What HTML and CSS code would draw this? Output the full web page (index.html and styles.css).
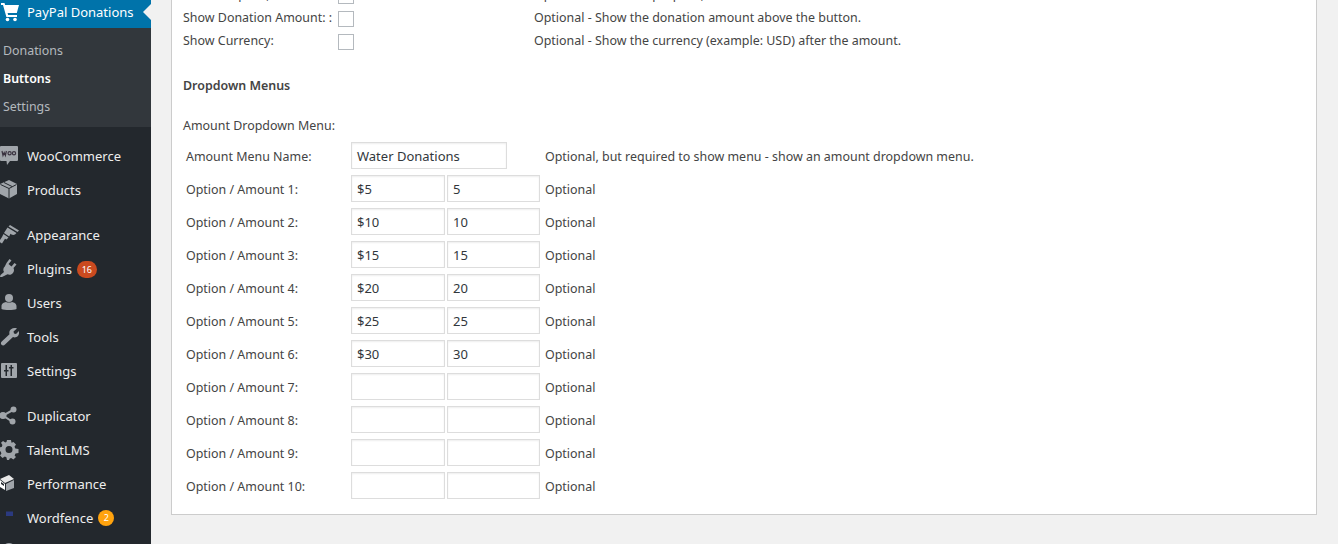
FILE: index.html
```html
<!DOCTYPE html>
<html lang="en">
<head>
    <meta charset="UTF-8">
    <title>PayPal Donations - Buttons</title>
    <link rel="stylesheet" href="styles.css">
</head>
<body>
    <div class="sidebar">
        <ul class="menu">
            <li class="menu-item current">
                <svg class="icon" viewBox="0 0 20 20"><path fill="#fff" d="M0 1h3.500l.6 2H18l-2.200 8H6.600l.5 2H16v2H5.400L2 3H0z"/><circle fill="#fff" cx="6.500" cy="17.500" r="1.800"/><circle fill="#fff" cx="14" cy="17.500" r="1.800"/></svg>
                <span>PayPal Donations</span>
            </li>
        </ul>
        <ul class="submenu">
            <li>Donations</li>
            <li class="active">Buttons</li>
            <li>Settings</li>
        </ul>
        <ul class="menu">
            <li class="menu-item">
                <svg class="icon" viewBox="0 0 20 20"><path fill="#a0a5aa" d="M2 0h16a1 1 0 0 1 1 1v13a1 1 0 0 1-1 1h-7l-3 4-.5-4H2a1 1 0 0 1-1-1V1a1 1 0 0 1 1-1z"/><path fill="none" stroke="#3a3340" stroke-width="1.200" d="M3 5l1 4.500 1.200-3 1.200 3 1-4.500"/><circle fill="none" stroke="#3a3340" stroke-width="1.200" cx="10.600" cy="7.300" r="1.600"/><circle fill="none" stroke="#3a3340" stroke-width="1.200" cx="15" cy="7.300" r="1.600"/></svg>
                <span>WooCommerce</span>
            </li>
            <li class="menu-item">
                <svg class="icon" viewBox="0 0 20 20"><path fill="#a0a5aa" d="M10 0l8 4v10l-8 4.500L1 14V4z"/><path fill="none" stroke="#23282d" d="M1.500 4.500l8.500 4 7.500-4M10 8.500v10M5 2.500l8 4"/></svg>
                <span>Products</span>
            </li>
            <li class="separator"></li>
            <li class="menu-item">
                <svg class="icon" viewBox="0 0 20 20"><path fill="#a0a5aa" d="M11 0l9 5.500-1.500 1.500-9-5.500z"/><path fill="#a0a5aa" d="M8.500 2.500l9 5.500c-1.300 2-3.500 2.500-5 1.500l-1-.7-1.300 2.700-5.200-3.500z"/><path fill="#a0a5aa" d="M4.500 9l5 3.500-2 2-1.500-.8L3 18.500 0 16.500l3-4.500z"/></svg>
                <span>Appearance</span>
            </li>
            <li class="menu-item">
                <svg class="icon" viewBox="0 0 20 20"><path fill="#a0a5aa" d="M10.500 0l2 1.500-3 3.500 3 2.500 3-3.500 2 1.500-3 3.500c1 2 .5 4-1 5.500-1.500 1.500-3.500 1.500-5 .8L3 18H1l.5-2 3.500-3c-1-1.500-1-4 .8-5.500L7.500 4z"/></svg>
                <span>Plugins</span>
                <span class="badge badge-plugins">16</span>
            </li>
            <li class="menu-item">
                <svg class="icon" viewBox="0 0 20 20"><circle fill="#a0a5aa" cx="10" cy="5" r="4"/><path fill="#a0a5aa" d="M2.500 16v-3c0-2.500 2.500-3.500 4.500-4 1 .8 5 .8 6 0 2 .5 4.500 1.500 4.500 4v3c-3 1.300-12 1.300-15 0z"/></svg>
                <span>Users</span>
            </li>
            <li class="menu-item">
                <svg class="icon" viewBox="0 0 20 20"><path fill="#a0a5aa" d="M18 1.500l-3.500 3 .5 2 2 .5 3-3c.5 3-.5 5-2.500 6-1.300.5-2.500.5-3.500 0L6 17.500c-1 1.300-2.500 1.300-3.500.3s-.8-2.500.5-3.500l7.500-7c-.5-2 0-3.800 1.500-5 2-1.500 4-1.500 6-.8z"/></svg>
                <span>Tools</span>
            </li>
            <li class="menu-item">
                <svg class="icon" viewBox="0 0 20 20"><path fill="#a0a5aa" d="M3 2h14a1 1 0 0 1 1 1v13a1 1 0 0 1-1 1H3a1 1 0 0 1-1-1V3a1 1 0 0 1 1-1z"/><path fill="#23282d" d="M6.500 4H8v5h1.500v1.500H8V15H6.500v-4.500H5V9h1.500zM11.500 4H13v2h1.500v1.500H13V15h-1.500V7.500H10V6h1.500z"/></svg>
                <span>Settings</span>
            </li>
            <li class="separator"></li>
            <li class="menu-item">
                <svg class="icon" viewBox="0 0 20 20"><circle fill="#a0a5aa" cx="14.500" cy="3.500" r="3"/><circle fill="#a0a5aa" cx="4" cy="9.500" r="3.500"/><circle fill="#a0a5aa" cx="13.500" cy="15.500" r="3"/><path fill="none" stroke="#a0a5aa" stroke-width="2" d="M14 4L4 9.500l9 6"/></svg>
                <span>Duplicator</span>
            </li>
            <li class="menu-item">
                <svg class="icon" viewBox="0 0 20 20"><path fill="#a0a5aa" fill-rule="evenodd" d="M8 0h4l.5 2.800 2-.8L17 4.500l-1.500 2.300.8 1.700 3.200.5v4l-3 .6-.9 1.800L17 17l-2.600 2.500-2.300-1.500-1.400.6L10 20H8l-.6-2.700-1.600-.7-2.300 1.500L1 15.600l1.400-2.200-.7-1.800L0 11V7.500l2.700-.6.700-1.800L2 2.800 4 1l2.300 1.500 1.200-.6zM10 6a3.500 3.500 0 1 0 0 7 3.500 3.500 0 0 0 0-7z"/></svg>
                <span>TalentLMS</span>
            </li>
            <li class="menu-item">
                <svg class="icon" viewBox="0 0 20 20"><path fill="#e8e8e8" d="M1 5l9-4 5 4-9 4z"/><path fill="#fff" d="M1 6l5 4v6l-5-3z"/><path fill="#a0a5aa" d="M15 6v8l-8 3v-7z"/><path fill="#23282d" d="M2 8l3 2v2L2 10z"/></svg>
                <span>Performance</span>
            </li>
            <li class="menu-item">
                <svg class="icon" viewBox="0 0 20 20"><path fill="#2b3a80" d="M7 3.500h7V8H7z"/></svg>
                <span>Wordfence</span>
                <span class="badge badge-wordfence">2</span>
            </li>
            <li class="menu-item">
                <svg class="icon" viewBox="0 0 20 20"><circle fill="#a0a5aa" cx="10" cy="8" r="7"/></svg>
            </li>
        </ul>
    </div>

    <div class="content">
        <div class="panel">
            <div class="checks">
                <span>Show Purpose, Name:</span>
                <span class="checkbox"></span>
                <span>Optional - Show the purpose, name above the button.</span>

                <span>Show Donation Amount: :</span>
                <span class="checkbox"></span>
                <span>Optional - Show the donation amount above the button.</span>

                <span>Show Currency:</span>
                <span class="checkbox"></span>
                <span>Optional - Show the currency (example: USD) after the amount.</span>
            </div>

            <h3 class="section-title">Dropdown Menus</h3>
            <p class="menu-title">Amount Dropdown Menu:</p>

            <div class="options">
                <span class="option-label">Amount Menu Name:</span>
                <div class="field-wide">Water Donations</div>
                <span>Optional, but required to show menu - show an amount dropdown menu.</span>

                <span class="option-label">Option / Amount 1:</span>
                <div class="field-pair"><div class="field">$5</div><div class="field">5</div></div>
                <span>Optional</span>

                <span class="option-label">Option / Amount 2:</span>
                <div class="field-pair"><div class="field">$10</div><div class="field">10</div></div>
                <span>Optional</span>

                <span class="option-label">Option / Amount 3:</span>
                <div class="field-pair"><div class="field">$15</div><div class="field">15</div></div>
                <span>Optional</span>

                <span class="option-label">Option / Amount 4:</span>
                <div class="field-pair"><div class="field">$20</div><div class="field">20</div></div>
                <span>Optional</span>

                <span class="option-label">Option / Amount 5:</span>
                <div class="field-pair"><div class="field">$25</div><div class="field">25</div></div>
                <span>Optional</span>

                <span class="option-label">Option / Amount 6:</span>
                <div class="field-pair"><div class="field">$30</div><div class="field">30</div></div>
                <span>Optional</span>

                <span class="option-label">Option / Amount 7:</span>
                <div class="field-pair"><div class="field"></div><div class="field"></div></div>
                <span>Optional</span>

                <span class="option-label">Option / Amount 8:</span>
                <div class="field-pair"><div class="field"></div><div class="field"></div></div>
                <span>Optional</span>

                <span class="option-label">Option / Amount 9:</span>
                <div class="field-pair"><div class="field"></div><div class="field"></div></div>
                <span>Optional</span>

                <span class="option-label">Option / Amount 10:</span>
                <div class="field-pair"><div class="field"></div><div class="field"></div></div>
                <span>Optional</span>
            </div>
        </div>
    </div>
</body>
</html>
```

FILE: styles.css
```css
* {
    box-sizing: border-box;
}
html, body {
    height: 544px;
    overflow: hidden;
}
body {
    margin: 0;
    display: flex;
    background-color: #f1f1f1;
    color: #444;
    font-family: "Noto Sans", sans-serif;
    font-size: 12.45px;
}
ul {
    list-style: none;
    margin: 0;
    padding: 0;
}

/* menu lateral */
.sidebar {
    width: 151px;
    flex-shrink: 0;
    height: 544px;
    overflow: hidden;
    background-color: #23282d;
    color: #eee;
    font-size: 13px;
}
.menu-item {
    display: flex;
    align-items: center;
    height: 34px;
    padding-left: 27px;
    position: relative;
}
.icon {
    position: absolute;
    left: -1px;
    top: 7px;
    width: 20px;
    height: 20px;
}
.separator {
    height: 11px;
}
.current {
    height: 28px;
    padding-bottom: 4px;
    background-color: #0073aa;
    color: #fff;
}
.current .icon {
    top: 2px;
    left: 1px;
}
.current::after {
    content: "";
    position: absolute;
    right: 0;
    top: 4px;
    border: 8px solid transparent;
    border-right-color: #f1f1f1;
    border-left-width: 0;
}
.submenu {
    background-color: #32373c;
    margin-bottom: 12px;
    padding: 8px 0 7px 3px;
    font-size: 12.4px;
    color: #b4b9be;
}
.submenu li {
    height: 28px;
    line-height: 30px;
}
.submenu .active {
    color: #fff;
    font-weight: 600;
}
.menu-item .badge {
    margin-left: 5px;
    color: #fff;
    font-size: 9px;
    text-align: center;
}
.badge-plugins {
    width: 20px;
    height: 17px;
    line-height: 17px;
    background-color: #ca4a1f;
    border-radius: 9px;
}
.badge-wordfence {
    width: 16px;
    height: 16px;
    line-height: 16px;
    background-color: #ffa30e;
    border-radius: 50%;
}

/* conteudo */
.content {
    flex: 1;
    padding: 0 21px 0 20px;
}
.panel {
    margin-top: -18px;
    height: 533px;
    background-color: #fff;
    border: 1px solid #ccc;
    padding: 0 11px;
}
.checks {
    display: grid;
    grid-template-columns: 155px 196px 1fr;
    grid-auto-rows: 23px;
    align-items: center;
}
.checkbox {
    display: block;
    width: 16px;
    height: 16px;
    margin-top: 3px;
    border: 1px solid #b4b9be;
    background-color: #fff;
}
.section-title {
    margin: 25px 0 0;
    height: 18px;
    line-height: 18px;
    font-size: 12.45px;
    font-weight: 600;
}
.menu-title {
    margin: 22px 0 0;
    height: 18px;
    line-height: 18px;
}
.options {
    display: grid;
    grid-template-columns: 165px 194px 1fr;
    grid-auto-rows: 33px;
    align-items: center;
    margin-top: 5px;
    padding-left: 3px;
}
.field-pair,
.field-wide {
    margin-bottom: 2px;
}
.field,
.field-wide {
    height: 27px;
    line-height: 27px;
    padding-left: 5px;
    border: 1px solid #ddd;
    box-shadow: inset 0 1px 2px rgba(0, 0, 0, 0.07);
    background-color: #fff;
    color: #32373c;
    font-size: 13px;
}
.field-wide {
    width: 156px;
}
.field-pair {
    display: flex;
    gap: 2px;
}
.field {
    width: 94px;
}
.field + .field {
    width: 93px;
}
```
